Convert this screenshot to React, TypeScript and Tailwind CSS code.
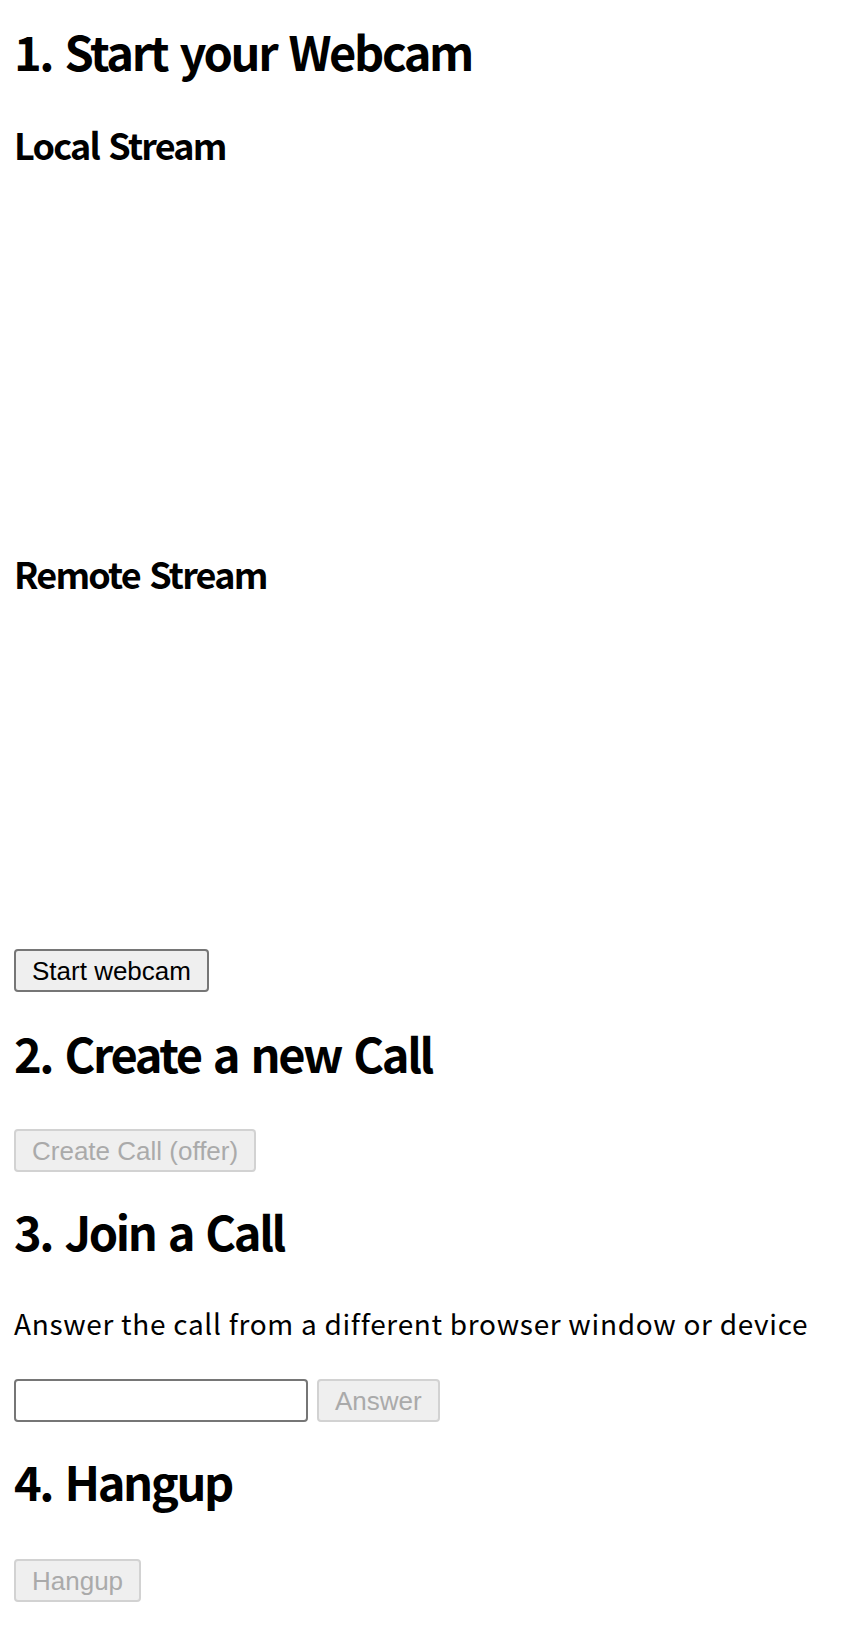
import React from "react";

const head = "font-['Noto_Sans_CJK_KR','Noto_Sans',sans-serif]";
const h1 = "text-[47px] leading-[56px] font-bold tracking-[-2.4px] [word-spacing:4px]";
const h2 = "text-[36px] leading-[42px] font-bold tracking-[-1.8px] [word-spacing:3px]";
const btnBase =
  "h-[43px] px-[16px] rounded-[4px] border-2 text-[26px] leading-[30px] font-['Liberation_Sans',Arial,sans-serif]";
const disabledBtn = "bg-[#efefef] border-[#d2d2d2] text-[#aaaaaa]";

export default function App() {
  return (
    <div className={`min-h-[1632px] bg-white px-[14px] pt-[23px] text-black ${head}`}>
      <h1 className={h1}>1. Start your Webcam</h1>

      <h2 className={`mt-[44px] ${h2}`}>Local Stream</h2>
      <div className="h-[387px]" />
      <h2 className={h2}>Remote Stream</h2>
      <div className="h-[355px]" />

      <button className={`${btnBase} block bg-[#efefef] border-[#767676] text-black`}>
        Start webcam
      </button>

      <h1 className={`mt-[33px] ${h1}`}>2. Create a new Call</h1>
      <button disabled className={`${btnBase} mt-[48px] block ${disabledBtn}`}>
        Create Call (offer)
      </button>

      <h1 className={`mt-[31px] ${h1}`}>3. Join a Call</h1>
      <p className="mt-[48px] text-[28px] leading-[32px] tracking-[0.7px]">
        Answer the call from a different browser window or device
      </p>
      <div className="mt-[40px] flex gap-[9px]">
        <input className="h-[43px] w-[294px] rounded-[4px] border-2 border-[#767676] bg-white" />
        <button disabled className={`${btnBase} px-[15px] ${disabledBtn}`}>
          Answer
        </button>
      </div>

      <h1 className={`mt-[31px] ${h1}`}>4. Hangup</h1>
      <button disabled className={`${btnBase} mt-[50px] block ${disabledBtn}`}>
        Hangup
      </button>
    </div>
  );
}
